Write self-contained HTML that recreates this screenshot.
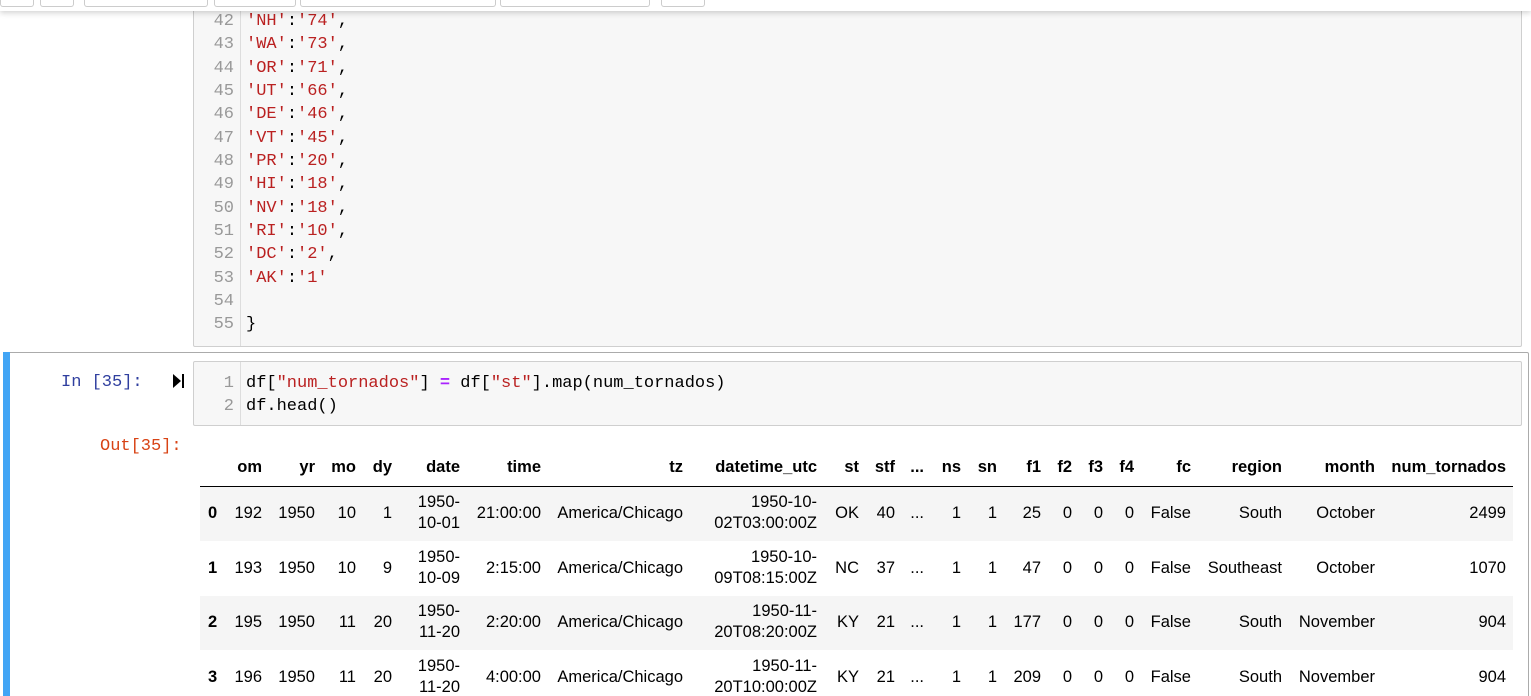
<!DOCTYPE html>
<html style="overflow:hidden;height:696px"><head><meta charset="utf-8"><style>
body{margin:0;width:1531px;height:696px;overflow:hidden;background:#fff;position:relative;font-family:"Liberation Sans",Arial,sans-serif;}
.abs{position:absolute}
.top{position:absolute;left:0;top:0;width:1531px;height:11px;background:#fff;box-shadow:0 2px 6px rgba(0,0,0,.18);z-index:5}
.btn{position:absolute;top:-3px;height:9px;border:1px solid #ccc;border-top:none;border-radius:0 0 3px 3px;background:#fff}
.code{position:absolute;left:193px;width:1327px;background:#f7f7f7;border:1px solid #cfcfcf;border-radius:2px}
.gut{position:absolute;left:0;top:0;bottom:0;width:46px;border-right:1px solid #ddd;}
.ln{position:absolute;font-family:"Liberation Mono",monospace;font-size:17px;color:#999;right:1297px;text-align:right}
.tx{position:absolute;left:246px;font-family:"Liberation Mono",monospace;font-size:17px;color:#000;white-space:pre}
.s{color:#ba2121}
.c{position:absolute;font-size:16.5px;color:#000;text-align:right;white-space:nowrap;line-height:21px}
.h{font-weight:bold}
.stripe{position:absolute;left:200px;width:1313px;background:#f5f5f5}
</style></head><body>
<div class="top">
<div class="btn" style="left:0;width:32px"></div>
<div class="btn" style="left:40px;width:32px"></div>
<div class="btn" style="left:84px;width:122px"></div>
<div class="btn" style="left:214px;width:80px"></div>
<div class="btn" style="left:300px;width:194px"></div>
<div class="btn" style="left:500px;width:148px"></div>
<div class="btn" style="left:661px;width:42px"></div>
</div>
<div class="code" style="top:-5px;height:350px"><div class="gut"></div></div>
<div class="ln" style="top:12px">42</div><div class="tx" style="top:12px"><span class="s">'NH'</span>:<span class="s">'74'</span>,</div>
<div class="ln" style="top:35px">43</div><div class="tx" style="top:35px"><span class="s">'WA'</span>:<span class="s">'73'</span>,</div>
<div class="ln" style="top:59px">44</div><div class="tx" style="top:59px"><span class="s">'OR'</span>:<span class="s">'71'</span>,</div>
<div class="ln" style="top:82px">45</div><div class="tx" style="top:82px"><span class="s">'UT'</span>:<span class="s">'66'</span>,</div>
<div class="ln" style="top:105px">46</div><div class="tx" style="top:105px"><span class="s">'DE'</span>:<span class="s">'46'</span>,</div>
<div class="ln" style="top:129px">47</div><div class="tx" style="top:129px"><span class="s">'VT'</span>:<span class="s">'45'</span>,</div>
<div class="ln" style="top:152px">48</div><div class="tx" style="top:152px"><span class="s">'PR'</span>:<span class="s">'20'</span>,</div>
<div class="ln" style="top:175px">49</div><div class="tx" style="top:175px"><span class="s">'HI'</span>:<span class="s">'18'</span>,</div>
<div class="ln" style="top:199px">50</div><div class="tx" style="top:199px"><span class="s">'NV'</span>:<span class="s">'18'</span>,</div>
<div class="ln" style="top:222px">51</div><div class="tx" style="top:222px"><span class="s">'RI'</span>:<span class="s">'10'</span>,</div>
<div class="ln" style="top:245px">52</div><div class="tx" style="top:245px"><span class="s">'DC'</span>:<span class="s">'2'</span>,</div>
<div class="ln" style="top:269px">53</div><div class="tx" style="top:269px"><span class="s">'AK'</span>:<span class="s">'1'</span></div>
<div class="ln" style="top:292px">54</div>
<div class="ln" style="top:315px">55</div><div class="tx" style="top:315px">}</div>

<div class="abs" style="left:3px;top:352px;width:1524px;height:360px;border:1px solid #ababab;border-radius:2px"></div>
<div class="abs" style="left:3px;top:352px;width:7px;height:360px;background:#42a5f5"></div>
<div class="abs" style="left:61px;top:373px;font-family:'Liberation Mono',monospace;font-size:17px;color:#303f9f">In [35]:</div>
<div class="abs" style="left:173px;top:374px;width:0;height:0;border-left:8px solid #000;border-top:7px solid transparent;border-bottom:7px solid transparent"></div>
<div class="abs" style="left:182px;top:374px;width:2px;height:14px;background:#000"></div>
<div class="code" style="top:361px;height:63px"><div class="gut"></div></div>
<div class="ln" style="top:374px">1</div><div class="tx" style="top:374px">df[<span class="s">"num_tornados"</span>] <b style="color:#aa22ff">=</b> df[<span class="s">"st"</span>].map(num_tornados)</div>
<div class="ln" style="top:397px">2</div><div class="tx" style="top:397px">df.head()</div>
<div class="abs" style="left:100px;top:437px;font-family:'Liberation Mono',monospace;font-size:17px;color:#d84315">Out[35]:</div>

<div class="abs" style="left:200px;top:486px;width:1313px;height:1px;background:#000"></div>
<div class="stripe" style="top:487px;height:54px"></div>
<div class="stripe" style="top:596px;height:54px"></div>

<div class="c h" style="top:457px;right:1269px">om</div>
<div class="c h" style="top:457px;right:1216px">yr</div>
<div class="c h" style="top:457px;right:1175px">mo</div>
<div class="c h" style="top:457px;right:1139px">dy</div>
<div class="c h" style="top:457px;right:1071px">date</div>
<div class="c h" style="top:457px;right:990px">time</div>
<div class="c h" style="top:457px;right:848px">tz</div>
<div class="c h" style="top:457px;right:714px">datetime_utc</div>
<div class="c h" style="top:457px;right:672px">st</div>
<div class="c h" style="top:457px;right:636px">stf</div>
<div class="c h" style="top:457px;right:607px">...</div>
<div class="c h" style="top:457px;right:570px">ns</div>
<div class="c h" style="top:457px;right:534px">sn</div>
<div class="c h" style="top:457px;right:490px">f1</div>
<div class="c h" style="top:457px;right:459px">f2</div>
<div class="c h" style="top:457px;right:428px">f3</div>
<div class="c h" style="top:457px;right:397px">f4</div>
<div class="c h" style="top:457px;right:340px">fc</div>
<div class="c h" style="top:457px;right:249px">region</div>
<div class="c h" style="top:457px;right:156px">month</div>
<div class="c h" style="top:457px;right:25px">num_tornados</div>

<div class="c h" style="top:503px;left:208px">0</div>
<div class="c" style="top:503px;right:1269px">192</div>
<div class="c" style="top:503px;right:1216px">1950</div>
<div class="c" style="top:503px;right:1175px">10</div>
<div class="c" style="top:503px;right:1139px">1</div>
<div class="c" style="top:492px;right:1071px">1950-<br>10-01</div>
<div class="c" style="top:503px;right:990px">21:00:00</div>
<div class="c" style="top:503px;right:848px">America/Chicago</div>
<div class="c" style="top:492px;right:714px">1950-10-<br>02T03:00:00Z</div>
<div class="c" style="top:503px;right:672px">OK</div>
<div class="c" style="top:503px;right:636px">40</div>
<div class="c" style="top:503px;right:607px">...</div>
<div class="c" style="top:503px;right:570px">1</div>
<div class="c" style="top:503px;right:534px">1</div>
<div class="c" style="top:503px;right:490px">25</div>
<div class="c" style="top:503px;right:459px">0</div>
<div class="c" style="top:503px;right:428px">0</div>
<div class="c" style="top:503px;right:397px">0</div>
<div class="c" style="top:503px;right:340px">False</div>
<div class="c" style="top:503px;right:249px">South</div>
<div class="c" style="top:503px;right:156px">October</div>
<div class="c" style="top:503px;right:25px">2499</div>

<div class="c h" style="top:558px;left:208px">1</div>
<div class="c" style="top:558px;right:1269px">193</div>
<div class="c" style="top:558px;right:1216px">1950</div>
<div class="c" style="top:558px;right:1175px">10</div>
<div class="c" style="top:558px;right:1139px">9</div>
<div class="c" style="top:547px;right:1071px">1950-<br>10-09</div>
<div class="c" style="top:558px;right:990px">2:15:00</div>
<div class="c" style="top:558px;right:848px">America/Chicago</div>
<div class="c" style="top:547px;right:714px">1950-10-<br>09T08:15:00Z</div>
<div class="c" style="top:558px;right:672px">NC</div>
<div class="c" style="top:558px;right:636px">37</div>
<div class="c" style="top:558px;right:607px">...</div>
<div class="c" style="top:558px;right:570px">1</div>
<div class="c" style="top:558px;right:534px">1</div>
<div class="c" style="top:558px;right:490px">47</div>
<div class="c" style="top:558px;right:459px">0</div>
<div class="c" style="top:558px;right:428px">0</div>
<div class="c" style="top:558px;right:397px">0</div>
<div class="c" style="top:558px;right:340px">False</div>
<div class="c" style="top:558px;right:249px">Southeast</div>
<div class="c" style="top:558px;right:156px">October</div>
<div class="c" style="top:558px;right:25px">1070</div>

<div class="c h" style="top:612px;left:208px">2</div>
<div class="c" style="top:612px;right:1269px">195</div>
<div class="c" style="top:612px;right:1216px">1950</div>
<div class="c" style="top:612px;right:1175px">11</div>
<div class="c" style="top:612px;right:1139px">20</div>
<div class="c" style="top:601px;right:1071px">1950-<br>11-20</div>
<div class="c" style="top:612px;right:990px">2:20:00</div>
<div class="c" style="top:612px;right:848px">America/Chicago</div>
<div class="c" style="top:601px;right:714px">1950-11-<br>20T08:20:00Z</div>
<div class="c" style="top:612px;right:672px">KY</div>
<div class="c" style="top:612px;right:636px">21</div>
<div class="c" style="top:612px;right:607px">...</div>
<div class="c" style="top:612px;right:570px">1</div>
<div class="c" style="top:612px;right:534px">1</div>
<div class="c" style="top:612px;right:490px">177</div>
<div class="c" style="top:612px;right:459px">0</div>
<div class="c" style="top:612px;right:428px">0</div>
<div class="c" style="top:612px;right:397px">0</div>
<div class="c" style="top:612px;right:340px">False</div>
<div class="c" style="top:612px;right:249px">South</div>
<div class="c" style="top:612px;right:156px">November</div>
<div class="c" style="top:612px;right:25px">904</div>

<div class="c h" style="top:667px;left:208px">3</div>
<div class="c" style="top:667px;right:1269px">196</div>
<div class="c" style="top:667px;right:1216px">1950</div>
<div class="c" style="top:667px;right:1175px">11</div>
<div class="c" style="top:667px;right:1139px">20</div>
<div class="c" style="top:656px;right:1071px">1950-<br>11-20</div>
<div class="c" style="top:667px;right:990px">4:00:00</div>
<div class="c" style="top:667px;right:848px">America/Chicago</div>
<div class="c" style="top:656px;right:714px">1950-11-<br>20T10:00:00Z</div>
<div class="c" style="top:667px;right:672px">KY</div>
<div class="c" style="top:667px;right:636px">21</div>
<div class="c" style="top:667px;right:607px">...</div>
<div class="c" style="top:667px;right:570px">1</div>
<div class="c" style="top:667px;right:534px">1</div>
<div class="c" style="top:667px;right:490px">209</div>
<div class="c" style="top:667px;right:459px">0</div>
<div class="c" style="top:667px;right:428px">0</div>
<div class="c" style="top:667px;right:397px">0</div>
<div class="c" style="top:667px;right:340px">False</div>
<div class="c" style="top:667px;right:249px">South</div>
<div class="c" style="top:667px;right:156px">November</div>
<div class="c" style="top:667px;right:25px">904</div>
</body></html>
